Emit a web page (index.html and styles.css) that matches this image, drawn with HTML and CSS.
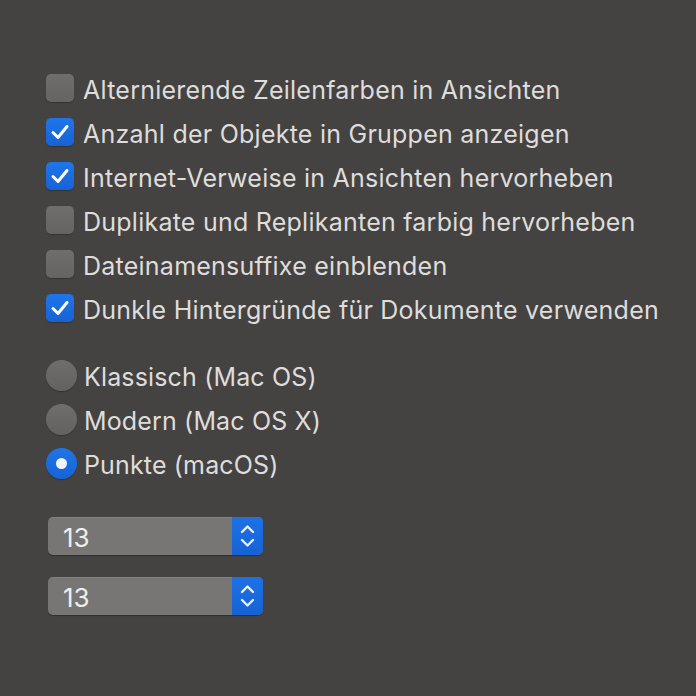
FILE: index.html
```html
<!DOCTYPE html>
<html>
<head>
<meta charset="utf-8">
<link rel="stylesheet" href="styles.css">
</head>
<body>
<div class="panel">
  <div class="checks">
    <div class="row"><span class="box"></span><span class="label">Alternierende Zeilenfarben in Ansichten</span></div>
    <div class="row"><span class="box on"><svg viewBox="0 0 28 28"><path d="M7 14.5 L12 19.5 L21 8.5" /></svg></span><span class="label">Anzahl der Objekte in Gruppen anzeigen</span></div>
    <div class="row"><span class="box on"><svg viewBox="0 0 28 28"><path d="M7 14.5 L12 19.5 L21 8.5" /></svg></span><span class="label">Internet-Verweise in Ansichten hervorheben</span></div>
    <div class="row"><span class="box"></span><span class="label">Duplikate und Replikanten farbig hervorheben</span></div>
    <div class="row"><span class="box"></span><span class="label">Dateinamensuffixe einblenden</span></div>
    <div class="row"><span class="box on"><svg viewBox="0 0 28 28"><path d="M7 14.5 L12 19.5 L21 8.5" /></svg></span><span class="label">Dunkle Hintergründe für Dokumente verwenden</span></div>
  </div>
  <div class="radios">
    <div class="row"><span class="radio"></span><span class="label">Klassisch (Mac OS)</span></div>
    <div class="row"><span class="radio"></span><span class="label">Modern (Mac OS X)</span></div>
    <div class="row"><span class="radio on"><span class="dot"></span></span><span class="label">Punkte (macOS)</span></div>
  </div>
  <div class="pops">
    <div class="pop"><span class="val">13</span><span class="arrows"><svg viewBox="0 0 31 38"><path d="M10 15 L15.5 9.5 L21 15" /><path d="M10 23 L15.5 28.5 L21 23" /></svg></span></div>
    <div class="pop"><span class="val">13</span><span class="arrows"><svg viewBox="0 0 31 38"><path d="M10 15 L15.5 9.5 L21 15" /><path d="M10 23 L15.5 28.5 L21 23" /></svg></span></div>
  </div>
</div>
</body>
</html>
```
FILE: styles.css
```css
html, body {
  margin: 0;
  padding: 0;
  background: #454341;
  width: 696px;
  height: 696px;
  overflow: hidden;
}
.panel {
  padding: 74px 0 0 46px;
  font-family: Inter, "Noto Sans", sans-serif;
  color: #dedddc;
}
.checks {
  display: flex;
  flex-direction: column;
  gap: 16px;
}
.row {
  display: flex;
  align-items: center;
  height: 28px;
}
.label {
  font-size: 25px;
  line-height: 28px;
  letter-spacing: 0.24px;
  white-space: nowrap;
  padding-top: 3px;
}
.checks .label { margin-left: 9px; }
.box {
  width: 28px;
  height: 28px;
  box-sizing: border-box;
  border-radius: 5px;
  background: linear-gradient(#6f6e6d, #656463);
  box-shadow: 0 1px 1px rgba(0,0,0,0.25);
  flex: none;
  display: flex;
}
.box.on {
  background: linear-gradient(#1f75e8, #1763d6);
}
.box svg { width: 28px; height: 28px; }
.box path, .arrows path {
  fill: none;
  stroke: #ffffff;
  stroke-width: 3;
  stroke-linecap: round;
  stroke-linejoin: round;
}
.radios {
  margin-top: 38px;
  display: flex;
  flex-direction: column;
  gap: 13px;
}
.radios .row { height: 31px; }
.radios .label { margin-left: 7px; letter-spacing: 0.15px; }
.radio {
  width: 31px;
  height: 31px;
  border-radius: 50%;
  background: linear-gradient(#6f6e6d, #636261);
  box-shadow: 0 1px 1px rgba(0,0,0,0.25);
  flex: none;
  display: flex;
  align-items: center;
  justify-content: center;
}
.radio.on { background: linear-gradient(#1f75e8, #1763d6); }
.dot {
  width: 11px;
  height: 11px;
  border-radius: 50%;
  background: #f4f6fa;
}
.pops {
  margin-top: 38px;
  margin-left: 2px;
  display: flex;
  flex-direction: column;
  gap: 22px;
}
.pop {
  width: 215px;
  height: 38px;
  border-radius: 5px;
  background: #777675;
  box-shadow: 0 1px 1px rgba(0,0,0,0.3), inset 0 1px 0 rgba(255,255,255,0.08);
  display: flex;
  overflow: hidden;
}
.val {
  flex: 1;
  padding-left: 15px;
  padding-top: 2px;
  font-size: 26px;
  line-height: 38px;
  color: #eeeeed;
}
.arrows {
  width: 31px;
  height: 38px;
  background: linear-gradient(#1d72e6, #1762d4);
  display: flex;
}
.arrows svg { width: 31px; height: 38px; }
.arrows path { stroke-width: 2.4; stroke: #e8eefa; }
```
